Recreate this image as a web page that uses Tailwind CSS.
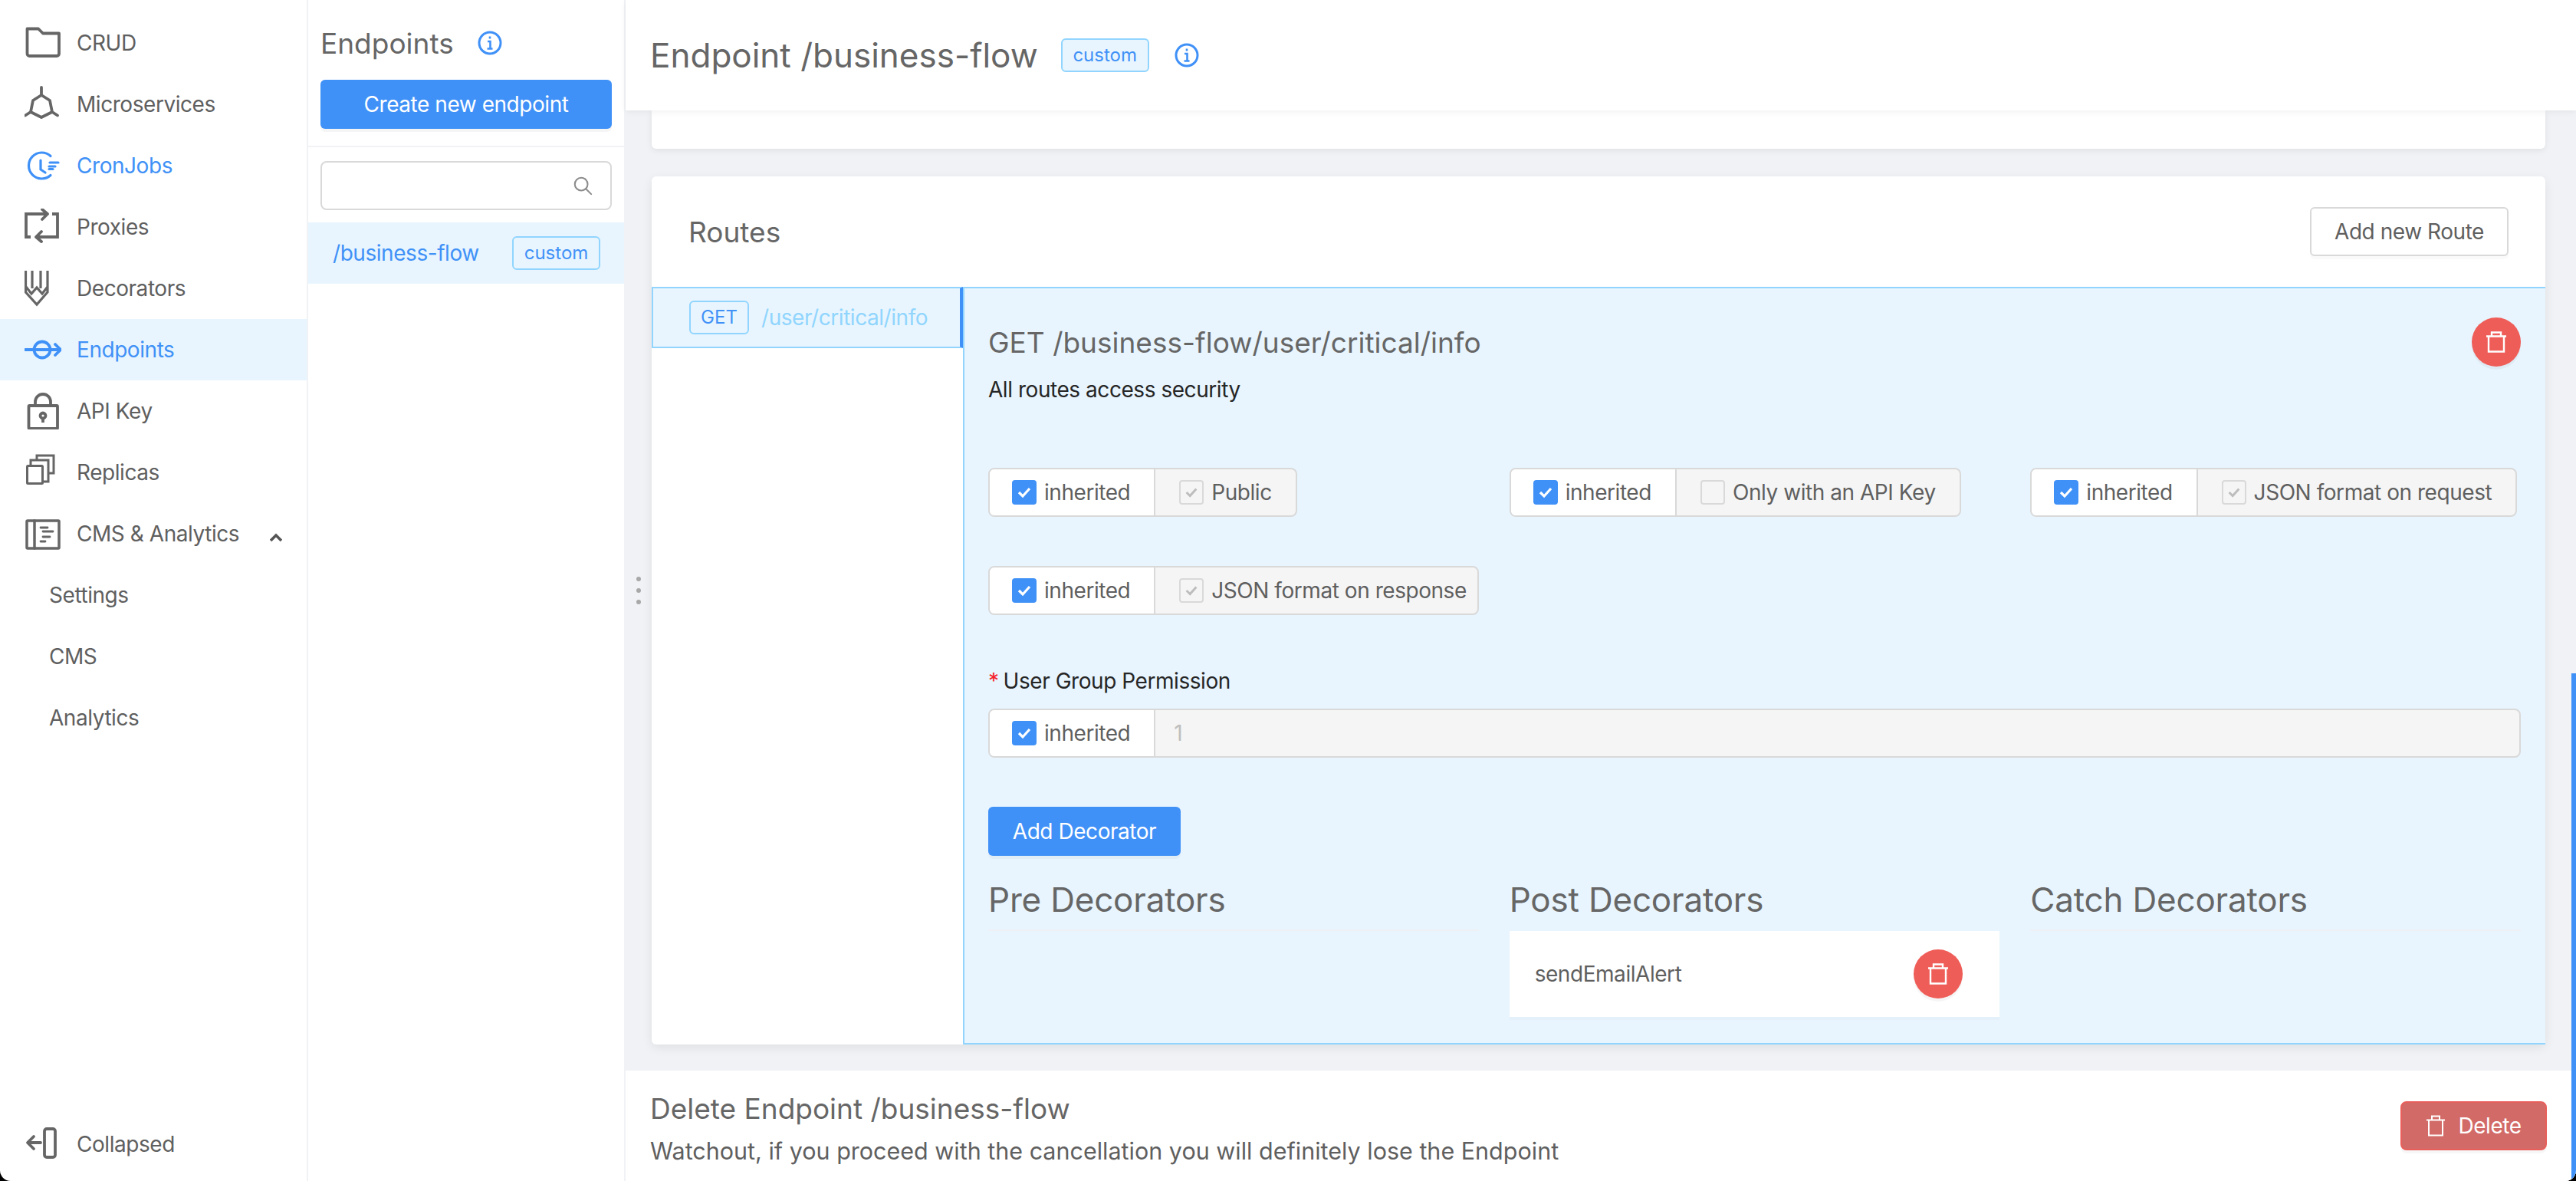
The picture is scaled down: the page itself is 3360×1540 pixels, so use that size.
<!DOCTYPE html>
<html lang="en">
<head>
    <meta charset="UTF-8">
    <title>Endpoint /business-flow</title>
    <script src="https://cdn.jsdelivr.net/npm/@tailwindcss/browser@4"></script>
</head>
<body class="bg-black font-['Inter',sans-serif] text-[28px] tracking-[-0.45px] text-[#5f5f5f]">
<div class="relative flex h-[1540px] w-[3360px] overflow-hidden rounded-b-[14px] bg-white">

    <!-- Sidebar -->
    <aside class="flex w-[402px] shrink-0 flex-col border-r-2 border-[#f0f2f5] pt-[16px] pb-[8px]">
        <a class="flex h-[80px] items-center pl-[32px]">
            <svg class="mr-[20px]" width="48" height="48" viewBox="0 0 48 48" fill="none" stroke="#666" stroke-width="3.800" stroke-linejoin="round"><path d="M3.500 5.500H18L24 11.500H45V38a3 3 0 0 1-3 3H6.500a3 3 0 0 1-3-3Z"/></svg>
            CRUD
        </a>
        <a class="flex h-[80px] items-center pl-[32px]">
            <svg class="mr-[20px]" width="48" height="48" viewBox="0 0 48 48" fill="none" stroke="#666" stroke-width="3.800" stroke-linecap="round" stroke-linejoin="round"><path d="M22 12L33 19L36 34L22 41L8 34L11 19ZM22 2V12M36 34L43 38.500M8 34L1 38.500"/></svg>
            Microservices
        </a>
        <a class="flex h-[80px] items-center pl-[32px] text-[#4091f7]">
            <svg class="mr-[20px]" width="48" height="48" viewBox="0 0 48 48" fill="none" stroke="#4091f7" stroke-width="3.200" stroke-linecap="round"><path d="M34 11.500A17 17 0 1 0 34 36.500"/><path d="M21 17V29L27 33M33 20H44M32 25H40M32 28.500H37"/></svg>
            CronJobs
        </a>
        <a class="flex h-[80px] items-center pl-[32px]">
            <svg class="mr-[20px]" width="48" height="48" viewBox="0 0 48 48" fill="none" stroke="#666" stroke-width="3.800"><path d="M8 37H2V7H30M36 7H43V37H15"/><path stroke-linecap="round" stroke-linejoin="round" d="M23 1L30 7L23 14M22 30L15 37L22 43"/></svg>
            Proxies
        </a>
        <a class="flex h-[80px] items-center pl-[32px]">
            <svg class="mr-[20px]" width="48" height="48" viewBox="0 0 48 48" fill="none" stroke="#666" stroke-width="3.200"><path d="M1.500 1V29L16 45L30 29V1M10 1V24M21 1V24M2 22L9 31L16 23L23 31L30 22"/></svg>
            Decorators
        </a>
        <a class="flex h-[80px] items-center bg-[#e8f5fe] pl-[32px] text-[#4091f7]">
            <svg class="mr-[20px]" width="48" height="48" viewBox="0 0 48 48" fill="none" stroke="#4091f7" stroke-width="3.800" stroke-linecap="round" stroke-linejoin="round"><circle cx="23" cy="24" r="10.500"/><path d="M1 24H46M40 17L47 24L40 31"/></svg>
            Endpoints
        </a>
        <a class="flex h-[80px] items-center pl-[32px]">
            <svg class="mr-[20px]" width="48" height="48" viewBox="0 0 48 48" fill="none" stroke="#666" stroke-width="3.800"><rect x="5.500" y="17" width="37.500" height="30" rx="1"/><path d="M14 17V12a10 10 0 0 1 20 0V17"/><circle cx="24" cy="30" r="3.500"/><path d="M24 33V39"/></svg>
            API Key
        </a>
        <a class="flex h-[80px] items-center pl-[32px]">
            <svg class="mr-[20px]" width="48" height="48" viewBox="0 0 48 48" fill="none" stroke="#666" stroke-width="3"><rect x="3.500" y="15.500" width="20" height="23" rx="1"/><path d="M8 15V8H31V36H25M16 8V2H38V25H32"/></svg>
            Replicas
        </a>
        <a class="flex h-[80px] items-center pl-[32px]">
            <svg class="mr-[20px]" width="48" height="48" viewBox="0 0 48 48" fill="none" stroke="#666" stroke-width="3.500" stroke-linecap="round"><rect x="3" y="7" width="42" height="36" rx="1"/><path d="M13 7V43"/><path stroke-width="2.800" d="M21 16H30M24 21H37M24 28H33M21 34H27"/></svg>
            <span class="w-[252px]">CMS &amp; Analytics</span>
            <svg class="mt-[10px]" width="16" height="12" viewBox="0 0 16 12" fill="none" stroke="#555" stroke-width="3.600"><path d="M1 10L8 3L15 10"/></svg>
        </a>
        <a class="flex h-[80px] items-center pl-[64px]">Settings</a>
        <a class="flex h-[80px] items-center pl-[64px]">CMS</a>
        <a class="flex h-[80px] items-center pl-[64px]">Analytics</a>
        <a class="mt-auto flex h-[80px] items-center pl-[32px]">
            <svg class="mr-[20px]" width="48" height="48" viewBox="0 0 48 48" fill="none" stroke="#666" stroke-width="3.800" stroke-linecap="round" stroke-linejoin="round"><rect x="26" y="4" width="14" height="37" rx="3"/><path d="M21 22H5M12 14L4 22L12 30"/></svg>
            Collapsed
        </a>
    </aside>

    <!-- Endpoint list -->
    <section class="flex w-[414px] shrink-0 flex-col border-r-2 border-[#f0f2f5]">
        <div class="h-[192px] border-b-2 border-[#f0f2f5] px-[16px]">
            <div class="flex h-[104px] items-center pt-[8px] text-[37px] leading-none tracking-normal text-[#666]">
                Endpoints
                <svg class="ml-[31px]" width="32" height="32" viewBox="0 0 32 32" fill="none" stroke="#4091f7" stroke-width="3"><circle cx="16" cy="16" r="14"/><path d="M16 7.500V10.500M13 14H16.500V23M12.500 23.500H19.500" stroke-width="2.600"/></svg>
            </div>
            <button class="h-[64px] w-[380px] rounded-[6px] bg-[#4091f7] text-white shadow-[0_4px_0_rgba(0,0,0,0.04)]">Create new endpoint</button>
        </div>
        <div class="px-[16px] pt-[18px] pb-[16px]">
            <div class="flex h-[64px] w-[380px] items-center justify-end rounded-[8px] border-2 border-[#d9d9d9] pr-[23px]">
                <svg width="26" height="26" viewBox="0 0 28 28" fill="none" stroke="#8c8c8c" stroke-width="2.200" stroke-linecap="round"><circle cx="12" cy="12" r="9"/><path d="M18.500 18.500L26 26"/></svg>
            </div>
        </div>
        <div class="flex h-[80px] items-center justify-between bg-[#e8f5fe] pr-[31px] pl-[32px] text-[#4091f7]">
            /business-flow
            <span class="flex h-[44px] w-[115px] items-center justify-center rounded-[6px] border-2 border-[#91d5ff] text-[24px] leading-none tracking-normal">custom</span>
        </div>
    </section>

    <!-- Main -->
    <main class="relative flex min-w-0 flex-1 flex-col bg-[#f0f2f5]">
        <header class="z-10 flex h-[144px] shrink-0 items-center bg-white pl-[32px] shadow-[0_2px_8px_rgba(0,0,0,0.06)]">
            <h1 class="text-[44px] leading-none tracking-normal text-[#666]">Endpoint /business-flow</h1>
            <span class="ml-[30px] flex h-[44px] w-[115px] items-center justify-center rounded-[6px] border-2 border-[#91d5ff] bg-[#e8f5fe] text-[24px] leading-none tracking-normal text-[#4091f7]">custom</span>
            <svg class="ml-[33px]" width="32" height="32" viewBox="0 0 32 32" fill="none" stroke="#4091f7" stroke-width="3"><circle cx="16" cy="16" r="14"/><path d="M16 7.500V10.500M13 14H16.500V23M12.500 23.500H19.500" stroke-width="2.600"/></svg>
        </header>

        <!-- Resize handle -->
        <div class="absolute top-[752px] left-[14px] flex flex-col gap-[9px]">
            <span class="size-[6px] rounded-full bg-[#a8a8a8]"></span>
            <span class="size-[6px] rounded-full bg-[#a8a8a8]"></span>
            <span class="size-[6px] rounded-full bg-[#a8a8a8]"></span>
        </div>

        <div class="flex-1 pr-[40px] pl-[34px]">
            <div class="h-[50px] rounded-b-[6px] bg-white shadow-[0_2px_8px_rgba(0,0,0,0.08)]"></div>

            <!-- Routes card -->
            <div class="mt-[36px] flex h-[1132px] flex-col rounded-[6px] bg-white shadow-[0_4px_14px_rgba(0,0,0,0.08)]">
                <div class="flex h-[144px] shrink-0 items-center justify-between pr-[48px] pl-[48px]">
                    <h2 class="text-[37px] leading-none tracking-normal text-[#666]">Routes</h2>
                    <button class="h-[64px] w-[259px] rounded-[6px] border-2 border-[#d9d9d9] bg-white shadow-[0_4px_0_rgba(0,0,0,0.02)]">Add new Route</button>
                </div>
                <div class="flex min-h-0 flex-1">
                    <div class="w-[406px] shrink-0">
                        <div class="flex h-[80px] items-center gap-[16px] border-2 border-r-[4px] border-[#91d5ff] border-r-[#4091f7] bg-[#e8f5fe] pl-[47px]">
                            <span class="flex h-[44px] w-[78px] items-center justify-center rounded-[6px] border-2 border-[#91d5ff] text-[24px] leading-none tracking-normal text-[#4091f7]">GET</span>
                            <span class="text-[#91d5ff]">/user/critical/info</span>
                        </div>
                    </div>

                    <!-- Route detail -->
                    <div class="min-w-0 flex-1 border-y-2 border-l-2 border-[#91d5ff] bg-[#e8f5fe] pt-[38px] pr-[32px] pl-[31px]">
                        <div class="flex h-[64px] items-center justify-between">
                            <h3 class="text-[37px] leading-none tracking-normal text-[#666]">GET /business-flow/user/critical/info</h3>
                            <button class="flex size-[64px] items-center justify-center rounded-full bg-[#ef5d58] shadow-[0_4px_0_rgba(0,0,0,0.04)]">
                                <svg width="28" height="28" viewBox="0 0 28 28" fill="none" stroke="#fff" stroke-width="2.400"><path d="M1 6.500H27M4 6.500V26.500H24V6.500M8 6.500V1.500H20V6.500"/></svg>
                            </button>
                        </div>
                        <p class="mt-[10px] h-[40px] leading-[40px] text-[#262626]">All routes access security</p>

                        <div class="mt-[82px] grid grid-cols-3 gap-x-[40px] gap-y-[64px] whitespace-nowrap">
                            <div class="flex h-[64px] w-fit overflow-hidden rounded-[8px] border-2 border-[#d9d9d9] bg-[#f5f5f5]">
                                <label class="flex items-center gap-[10px] border-r-2 border-[#d9d9d9] bg-white pr-[31px] pl-[29px]">
                                    <span class="flex size-[32px] items-center justify-center rounded-[4px] bg-[#4091f7]"><svg width="22" height="22" viewBox="0 0 22 22" fill="none" stroke="#fff" stroke-width="3.200"><path d="M4 11L9 16L18 6"/></svg></span>
                                    inherited
                                </label>
                                <label class="flex items-center gap-[10px] pr-[31px] pl-[31px]">
                                    <span class="flex size-[32px] items-center justify-center rounded-[4px] border-2 border-[#d9d9d9]"><svg width="20" height="20" viewBox="0 0 22 22" fill="none" stroke="#bdbdbd" stroke-width="3.200"><path d="M4 11L9 16L18 6"/></svg></span>
                                    Public
                                </label>
                            </div>
                            <div class="flex h-[64px] w-fit overflow-hidden rounded-[8px] border-2 border-[#d9d9d9] bg-[#f5f5f5]">
                                <label class="flex items-center gap-[10px] border-r-2 border-[#d9d9d9] bg-white pr-[31px] pl-[29px]">
                                    <span class="flex size-[32px] items-center justify-center rounded-[4px] bg-[#4091f7]"><svg width="22" height="22" viewBox="0 0 22 22" fill="none" stroke="#fff" stroke-width="3.200"><path d="M4 11L9 16L18 6"/></svg></span>
                                    inherited
                                </label>
                                <label class="flex items-center gap-[10px] pr-[31px] pl-[31px]">
                                    <span class="size-[32px] rounded-[4px] border-2 border-[#d9d9d9]"></span>
                                    Only with an API Key
                                </label>
                            </div>
                            <div class="flex h-[64px] w-fit overflow-hidden rounded-[8px] border-2 border-[#d9d9d9] bg-[#f5f5f5]">
                                <label class="flex items-center gap-[10px] border-r-2 border-[#d9d9d9] bg-white pr-[31px] pl-[29px]">
                                    <span class="flex size-[32px] items-center justify-center rounded-[4px] bg-[#4091f7]"><svg width="22" height="22" viewBox="0 0 22 22" fill="none" stroke="#fff" stroke-width="3.200"><path d="M4 11L9 16L18 6"/></svg></span>
                                    inherited
                                </label>
                                <label class="flex items-center gap-[10px] pr-[31px] pl-[31px]">
                                    <span class="flex size-[32px] items-center justify-center rounded-[4px] border-2 border-[#d9d9d9]"><svg width="20" height="20" viewBox="0 0 22 22" fill="none" stroke="#bdbdbd" stroke-width="3.200"><path d="M4 11L9 16L18 6"/></svg></span>
                                    JSON format on request
                                </label>
                            </div>
                            <div class="flex h-[64px] w-fit overflow-hidden rounded-[8px] border-2 border-[#d9d9d9] bg-[#f5f5f5]">
                                <label class="flex items-center gap-[10px] border-r-2 border-[#d9d9d9] bg-white pr-[31px] pl-[29px]">
                                    <span class="flex size-[32px] items-center justify-center rounded-[4px] bg-[#4091f7]"><svg width="22" height="22" viewBox="0 0 22 22" fill="none" stroke="#fff" stroke-width="3.200"><path d="M4 11L9 16L18 6"/></svg></span>
                                    inherited
                                </label>
                                <label class="flex items-center gap-[10px] pr-[14px] pl-[31px]">
                                    <span class="flex size-[32px] items-center justify-center rounded-[4px] border-2 border-[#d9d9d9]"><svg width="20" height="20" viewBox="0 0 22 22" fill="none" stroke="#bdbdbd" stroke-width="3.200"><path d="M4 11L9 16L18 6"/></svg></span>
                                    JSON format on response
                                </label>
                            </div>
                        </div>

                        <p class="mt-[66px] h-[40px] leading-[40px] text-[#262626]"><span class="mr-[6px] text-[#f5222d]">*</span>User Group Permission</p>
                        <div class="mt-[16px] flex h-[64px] overflow-hidden rounded-[8px] border-2 border-[#d9d9d9] bg-[#f5f5f5]">
                            <label class="flex items-center gap-[10px] border-r-2 border-[#d9d9d9] bg-white pr-[31px] pl-[29px]">
                                <span class="flex size-[32px] items-center justify-center rounded-[4px] bg-[#4091f7]"><svg width="22" height="22" viewBox="0 0 22 22" fill="none" stroke="#fff" stroke-width="3.200"><path d="M4 11L9 16L18 6"/></svg></span>
                                inherited
                            </label>
                            <span class="flex items-center pl-[24px] text-[#bfbfbf]">1</span>
                        </div>

                        <button class="mt-[64px] block h-[64px] w-[251px] rounded-[6px] bg-[#4091f7] text-white shadow-[0_4px_0_rgba(0,0,0,0.03)]">Add Decorator</button>

                        <div class="mt-[25px] grid grid-cols-3 gap-x-[40px]">
                            <div class="h-[73px] border-b-2 border-[#eef0f4] pb-[8px]">
                                <h4 class="text-[44px] leading-[64px] tracking-[-0.2px] text-[#666]">Pre Decorators</h4>
                            </div>
                            <div>
                                <div class="h-[73px] pb-[8px]">
                                    <h4 class="text-[44px] leading-[64px] tracking-[-0.2px] text-[#666]">Post Decorators</h4>
                                </div>
                                <div class="flex h-[112px] items-center justify-between bg-white pr-[48px] pl-[33px] shadow-[0_4px_0_rgba(0,0,0,0.015)]">
                                    sendEmailAlert
                                    <button class="flex size-[64px] items-center justify-center rounded-full bg-[#ef5d58] shadow-[0_4px_0_rgba(0,0,0,0.04)]">
                                        <svg width="28" height="28" viewBox="0 0 28 28" fill="none" stroke="#fff" stroke-width="2.400"><path d="M1 6.500H27M4 6.500V26.500H24V6.500M8 6.500V1.500H20V6.500"/></svg>
                                    </button>
                                </div>
                            </div>
                            <div class="h-[73px] border-b-2 border-[#eef0f4] pb-[8px]">
                                <h4 class="text-[44px] leading-[64px] tracking-[-0.2px] text-[#666]">Catch Decorators</h4>
                            </div>
                        </div>
                    </div>
                </div>
            </div>
        </div>

        <!-- Delete footer -->
        <footer class="flex h-[144px] shrink-0 items-center justify-between bg-white pr-[38px] pl-[32px]">
            <div class="pt-[6px]">
                <p class="text-[37px] leading-[50px] tracking-normal text-[#666]">Delete Endpoint /business-flow</p>
                <p class="mt-[10px] text-[30.500px] leading-[40px] tracking-normal">Watchout, if you proceed with the cancellation you will definitely lose the Endpoint</p>
            </div>
            <button class="flex h-[64px] w-[191px] items-center justify-center gap-[16px] rounded-[8px] border-2 border-[#e85f5b] bg-[#d26a67] text-white shadow-[0_4px_0_rgba(0,0,0,0.03)]">
                <svg width="26" height="28" viewBox="0 0 26 28" fill="none" stroke="#fff" stroke-width="2"><path d="M1 6.500H25M4 6.500V26.500H22V6.500M8 6.500V1.500H18V6.500"/></svg>
                Delete
            </button>
        </footer>
    </main>

    <!-- Scrollbar thumb -->
    <div class="absolute top-[878px] right-0 bottom-0 w-[6px] bg-[#4091f7]"></div>
</div>
</body>
</html>
